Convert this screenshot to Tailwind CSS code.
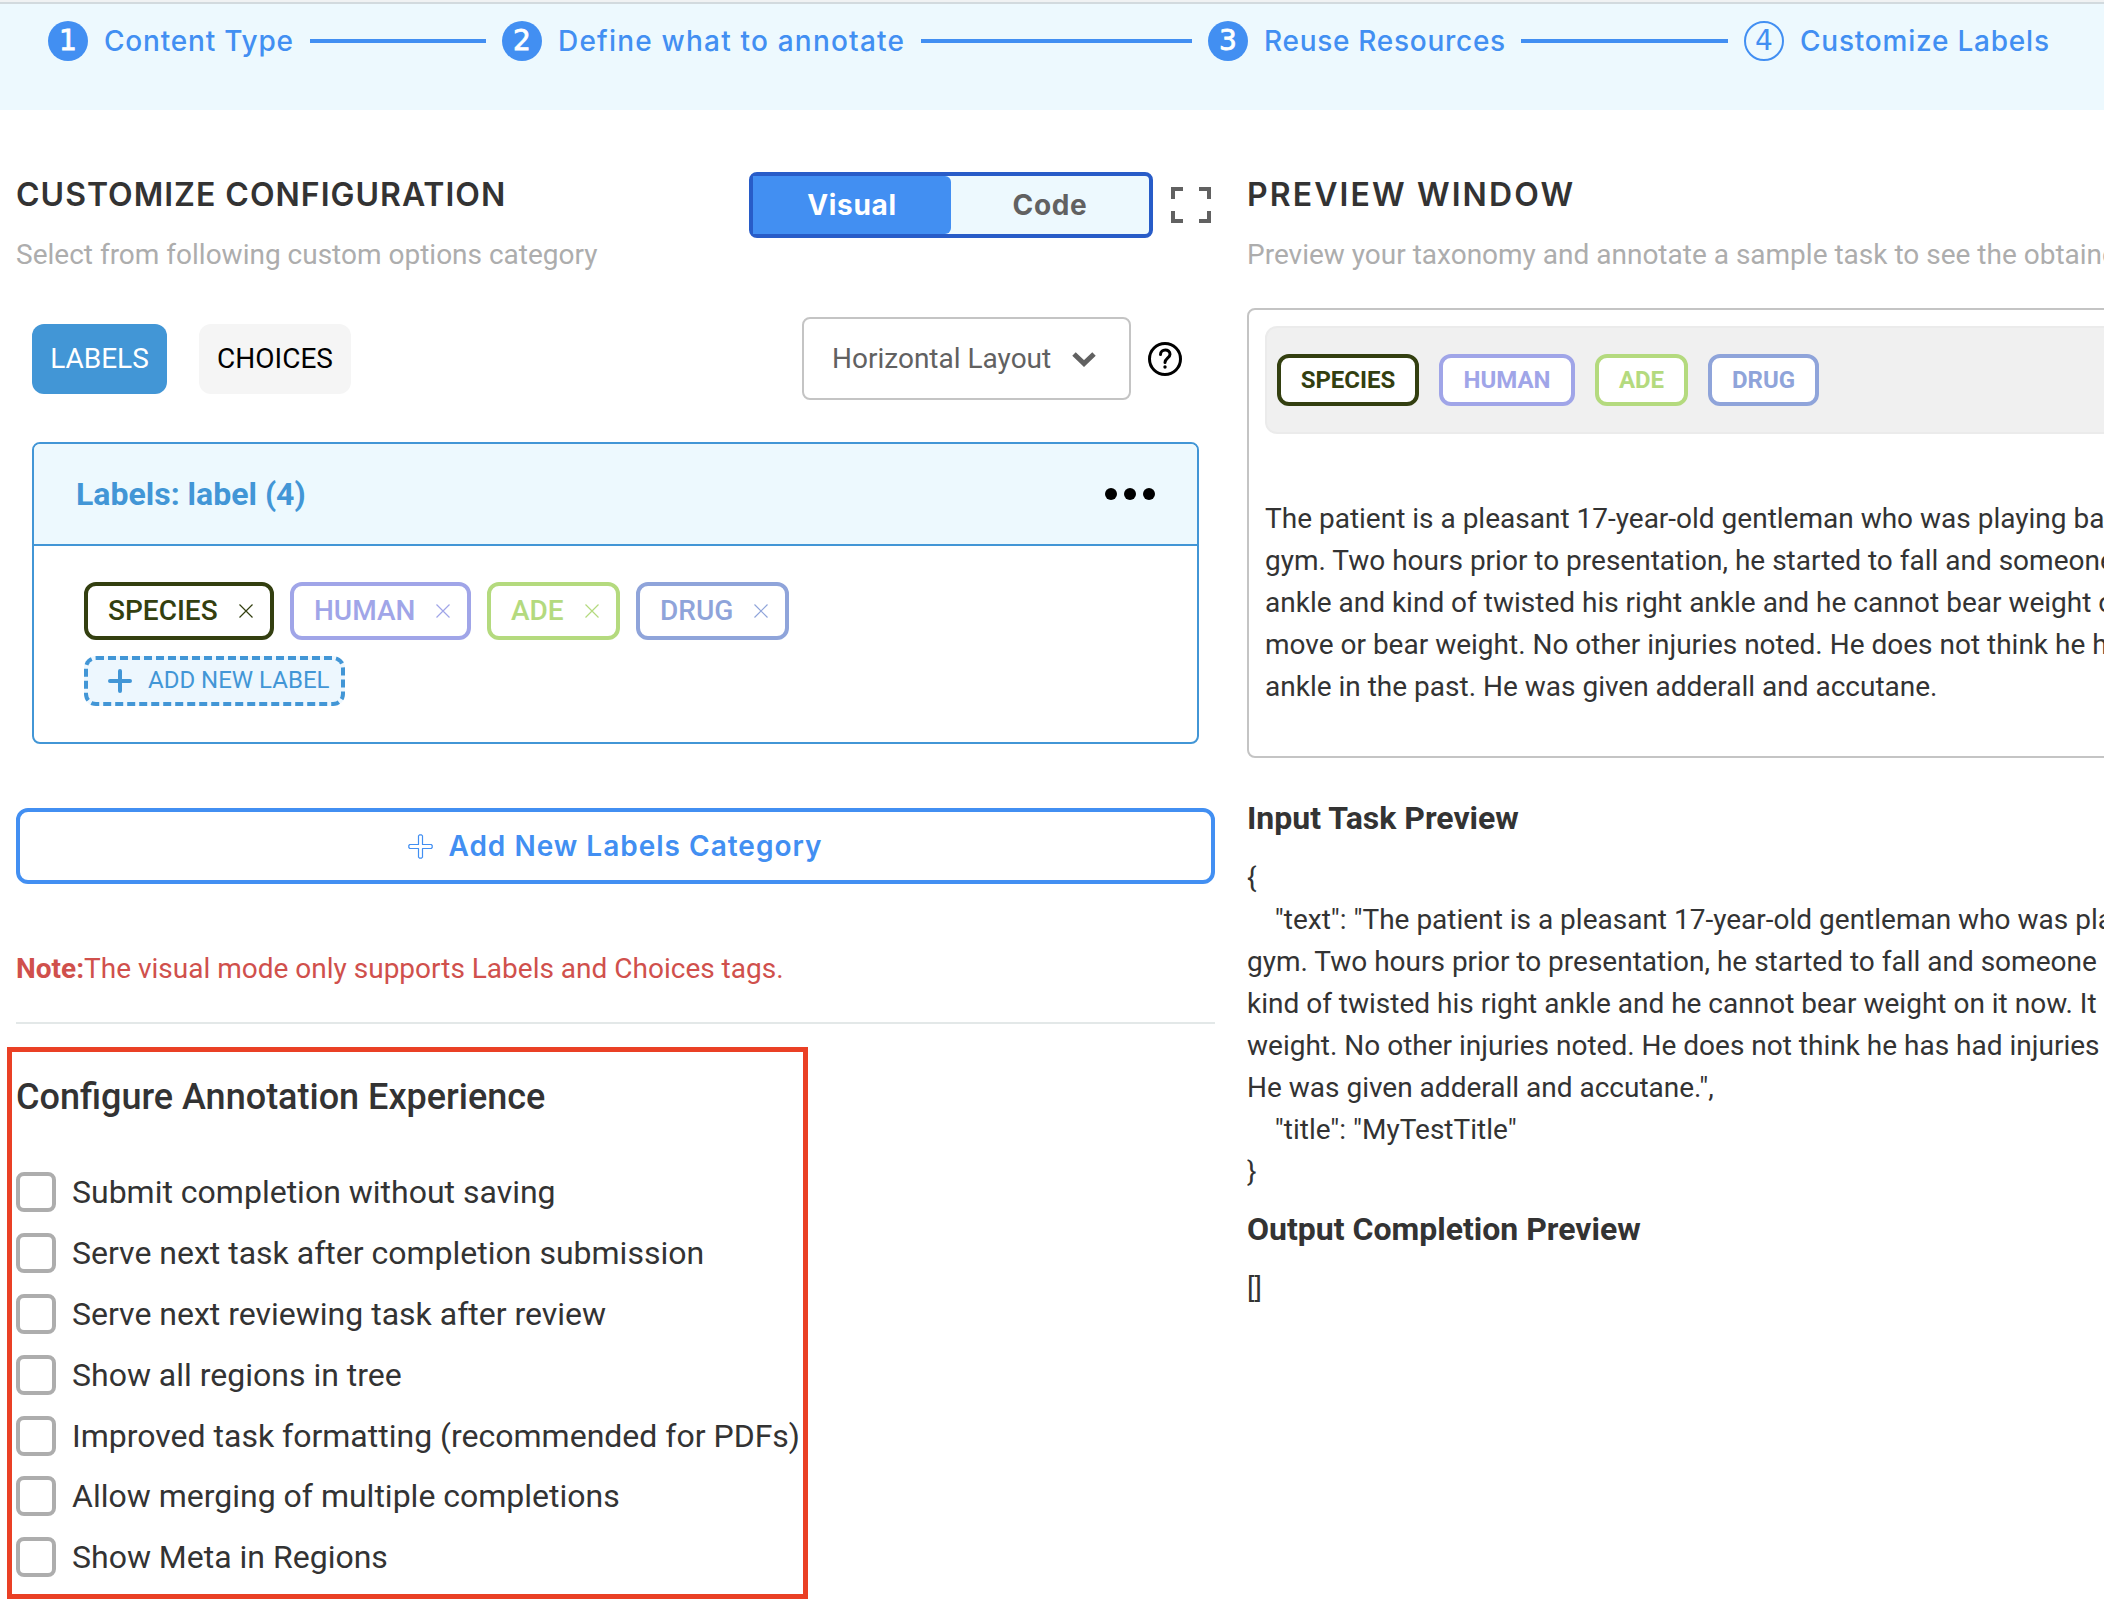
<!DOCTYPE html>
<html lang="en"><head><meta charset="utf-8"><title>Customize Labels</title>
<script src="https://cdn.jsdelivr.net/npm/@tailwindcss/browser@4"></script></head>
<body class="w-[2104px] h-[1618px] overflow-hidden bg-white font-['Roboto',sans-serif] text-[28px] leading-[42px] text-[#333]">
<header class="h-[110px] border-t-2 border-[#f0f2f3] bg-[#edf9fe]">
  <div class="h-[108px] border-t-2 border-[#d2dade] pt-[17px]">
  <ol class="flex items-center h-10 pl-12 font-['Inter',sans-serif] font-medium text-[#428ff2] whitespace-nowrap">
    <li class="flex items-center"><span class="size-10 rounded-full bg-[#428ff2] text-white flex items-center justify-center font-['DejaVu_Sans',sans-serif] font-normal [-webkit-text-stroke:0.8px_white]">1</span><span class="ml-4 w-[190px] tracking-[0.8px]">Content Type</span></li>
    <li class="mx-4 h-1 w-[176px] bg-[#428ff2]"></li>
    <li class="flex items-center"><span class="size-10 rounded-full bg-[#428ff2] text-white flex items-center justify-center font-['DejaVu_Sans',sans-serif] font-normal [-webkit-text-stroke:0.8px_white]">2</span><span class="ml-4 w-[347px] tracking-[1.2px]">Define what to annotate</span></li>
    <li class="mx-4 h-1 w-[271px] bg-[#428ff2]"></li>
    <li class="flex items-center"><span class="size-10 rounded-full bg-[#428ff2] text-white flex items-center justify-center font-['DejaVu_Sans',sans-serif] font-normal [-webkit-text-stroke:0.8px_white]">3</span><span class="ml-4 w-[241px] tracking-[0.72px]">Reuse Resources</span></li>
    <li class="mx-4 h-1 w-[207px] bg-[#428ff2]"></li>
    <li class="flex items-center"><span class="size-10 rounded-full border-2 border-[#428ff2] flex items-center justify-center font-['DejaVu_Sans',sans-serif] font-normal">4</span><span class="ml-4 tracking-[0.78px]">Customize Labels</span></li>
  </ol></div>
</header>
<main class="flex">
<section class="w-[1199px] ml-4 shrink-0">
  <div class="flex h-[207px] pt-[62px]">
    <div class="w-[733px]">
      <h1 class="mt-[2px] h-[42px] font-['Inter',sans-serif] font-semibold text-[32px] tracking-[1px] whitespace-nowrap">CUSTOMIZE CONFIGURATION</h1>
      <p class="mt-[18px] text-[#adadad]">Select from following custom options category</p>
    </div>
    <div class="flex w-[404px] h-[66px] rounded-lg border-4 border-[#285cc8] bg-[#edf9fe] font-['Inter',sans-serif] font-bold tracking-[0.7px]">
      <div class="w-[198px] rounded-r-md bg-[#428ff2] text-white flex items-center justify-center">Visual</div>
      <div class="flex-1 text-[#616161] flex items-center justify-center">Code</div>
    </div>
    <svg class="ml-[18px] mt-[15px] w-10 h-9" viewBox="0 0 40 36" fill="none" stroke="#616161" stroke-width="4"><path d="M2 12V2H12M28 2H38V12M38 24V34H28M12 34H2V24"/></svg>
  </div>
  <div class="flex items-center h-[83px] pl-4">
    <div class="w-[135px] h-[70px] rounded-xl bg-[#4296d6] text-white flex items-center justify-center">LABELS</div>
    <div class="ml-8 w-[152px] h-[70px] rounded-xl bg-[#f5f5f5] text-black flex items-center justify-center">CHOICES</div>
    <div class="ml-[451px] w-[329px] h-[83px] rounded-lg border-2 border-[#c4c4c4] text-[#616161] flex items-center pl-7">Horizontal Layout
      <svg class="ml-[21px] w-6 h-4" viewBox="0 0 24 16" fill="none" stroke="#616161" stroke-width="5"><path d="M2 3L12 12.500L22 3"/></svg></div>
    <svg class="ml-[17px] size-[34px]" viewBox="0 0 34 34" fill="none" stroke="#000" stroke-width="3"><circle cx="17" cy="17" r="15.500"/><path d="M12.500 12.500C12.500 6.500 22 6.500 22 12.200C22 16 17 16.500 17 20.500" stroke-linecap="round"/><circle cx="17" cy="25" r="1.700" fill="#000" stroke="none"/></svg>
  </div>
  <div class="ml-4 mt-[42px] w-[1167px] h-[302px] rounded-lg border-2 border-[#4296d6] overflow-hidden">
    <div class="flex items-center justify-between h-[102px] border-b-2 border-[#4296d6] bg-[#edf9fe] pl-[42px] pr-[42px]">
      <h2 class="text-[32px] font-bold text-[#4296d6]">Labels: label (4)</h2>
      <div class="flex gap-[7px]"><i class="size-3 rounded-full bg-black"></i><i class="size-3 rounded-full bg-black"></i><i class="size-3 rounded-full bg-black"></i></div>
    </div>
    <div class="pl-[50px] pt-9">
      <div class="flex gap-4 font-medium">
        <div class="w-[190px] h-[58px] rounded-xl border-4 border-[#333f10] text-[#333f10] flex items-center justify-between pl-5 pr-[17px]">SPECIES<svg class="size-[14px]" viewBox="0 0 14 14" stroke="currentColor" stroke-width="1.200"><path d="M.5.5L13.500 13.500M13.500.5L.5 13.500"/></svg></div>
        <div class="w-[181px] h-[58px] rounded-xl border-4 border-[#a0a5e8] text-[#a0a5e8] flex items-center justify-between pl-5 pr-[17px]">HUMAN<svg class="size-[14px]" viewBox="0 0 14 14" stroke="currentColor" stroke-width="1.200"><path d="M.5.5L13.500 13.500M13.500.5L.5 13.500"/></svg></div>
        <div class="w-[133px] h-[58px] rounded-xl border-4 border-[#b4da7e] text-[#b4da7e] flex items-center justify-between pl-5 pr-[17px]">ADE<svg class="size-[14px]" viewBox="0 0 14 14" stroke="currentColor" stroke-width="1.200"><path d="M.5.5L13.500 13.500M13.500.5L.5 13.500"/></svg></div>
        <div class="w-[153px] h-[58px] rounded-xl border-4 border-[#8fa4da] text-[#8fa4da] flex items-center justify-between pl-5 pr-[17px]">DRUG<svg class="size-[14px]" viewBox="0 0 14 14" stroke="currentColor" stroke-width="1.200"><path d="M.5.5L13.500 13.500M13.500.5L.5 13.500"/></svg></div>
      </div>
      <div class="mt-4 w-[261px] h-[50px] rounded-xl border-4 border-dashed border-[#4296d6] bg-[#edf7fe] text-[#4296d6] text-2xl flex items-center pl-5 whitespace-nowrap"><svg class="size-6 mr-4" viewBox="0 0 24 24" stroke="currentColor" stroke-width="4" stroke-linecap="round"><path d="M12 2V22M2 12H22"/></svg><span class="pb-[2px]">ADD NEW LABEL</span></div>
    </div>
  </div>
  <div class="mt-16 h-[76px] rounded-xl border-4 border-[#428ff2] text-[#428ff2] flex items-center justify-center font-['Inter',sans-serif] font-semibold tracking-[1px]"><svg class="size-[25px] mr-[15px]" viewBox="0 0 25 25" fill="none" stroke="currentColor" stroke-width="1.200" stroke-linejoin="round"><path d="M11.500.8H13.500L14.500 1.800V10.500H23.200L24.200 11.500V13.500L23.200 14.500H14.500V23.200L13.500 24.200H11.500L10.500 23.200V14.500H1.800L.8 13.500V11.500L1.800 10.500H10.500V1.800Z"/></svg>Add New Labels Category</div>
  <p class="mt-16 text-[#d0504c]"><b>Note:</b>The visual mode only supports Labels and Choices tags.</p>
  <div class="mt-8 h-[2px] bg-[#e3e8e8]"></div>
  <div class="-ml-[9px] mt-[23px] w-[801px] h-[552px] border-[5px] border-[#ea4025] pl-1 pt-[24px]">
    <h2 class="h-[42px] text-[36px] font-medium">Configure Annotation Experience</h2>
    <div class="mt-[44px] text-[32px] whitespace-nowrap">
      <label class="flex items-center h-[60.800px]"><span class="size-10 rounded-lg border-4 border-[#adadad] mr-4"></span>Submit completion without saving</label>
      <label class="flex items-center h-[60.800px]"><span class="size-10 rounded-lg border-4 border-[#adadad] mr-4"></span>Serve next task after completion submission</label>
      <label class="flex items-center h-[60.800px]"><span class="size-10 rounded-lg border-4 border-[#adadad] mr-4"></span>Serve next reviewing task after review</label>
      <label class="flex items-center h-[60.800px]"><span class="size-10 rounded-lg border-4 border-[#adadad] mr-4"></span>Show all regions in tree</label>
      <label class="flex items-center h-[60.800px]"><span class="size-10 rounded-lg border-4 border-[#adadad] mr-4"></span>Improved task formatting (recommended for PDFs)</label>
      <label class="flex items-center h-[60.800px]"><span class="size-10 rounded-lg border-4 border-[#adadad] mr-4"></span>Allow merging of multiple completions</label>
      <label class="flex items-center h-[60.800px]"><span class="size-10 rounded-lg border-4 border-[#adadad] mr-4"></span>Show Meta in Regions</label>
    </div>
  </div>
</section>
<section class="w-[857px] ml-8 shrink-0 overflow-hidden whitespace-nowrap">
  <div class="h-[198px] pt-16">
    <h1 class="h-[42px] font-['Inter',sans-serif] font-semibold text-[32px] tracking-[2.1px]">PREVIEW WINDOW</h1>
    <p class="mt-[18px] text-[#adadad]">Preview your taxonomy and annotate a sample task to see the obtained</p>
  </div>
  <div class="h-[450px] w-[900px] rounded-lg border-2 border-[#c4c4c4] pl-4 pt-4">
    <div class="h-[108px] rounded-xl border-2 border-[#ebebeb] bg-[#f0f0f0] flex items-center gap-5 pl-[10px] text-2xl font-bold">
      <div class="w-[142px] h-[52px] rounded-xl border-4 border-[#333f10] bg-white text-[#333f10] flex items-center justify-center">SPECIES</div>
      <div class="w-[136px] h-[52px] rounded-xl border-4 border-[#a0a5e8] bg-white text-[#a0a5e8] flex items-center justify-center">HUMAN</div>
      <div class="w-[93px] h-[52px] rounded-xl border-4 border-[#b4da7e] bg-white text-[#b4da7e] flex items-center justify-center">ADE</div>
      <div class="w-[111px] h-[52px] rounded-xl border-4 border-[#8fa4da] bg-white text-[#8fa4da] flex items-center justify-center">DRUG</div>
    </div>
    <p class="mt-16">The patient is a pleasant 17-year-old gentleman who was playing basketball<br>gym. Two hours prior to presentation, he started to fall and someone<br>ankle and kind of twisted his right ankle and he cannot bear weight on<br>move or bear weight. No other injuries noted. He does not think he has<br>ankle in the past. He was given adderall and accutane.</p>
  </div>
  <h2 class="mt-[39px] text-[32px] font-bold">Input Task Preview</h2>
  <pre class="mt-[18px] font-['Roboto',sans-serif]">{
    "text": "The patient is a pleasant 17-year-old gentleman who was playing
gym. Two hours prior to presentation, he started to fall and someone s
kind of twisted his right ankle and he cannot bear weight on it now. It
weight. No other injuries noted. He does not think he has had injuries
He was given adderall and accutane.",
    "title": "MyTestTitle"
}</pre>
  <h2 class="mt-[15px] text-[32px] font-bold">Output Completion Preview</h2>
  <p class="mt-[18px]">[]</p>
</section>
</main>
</body></html>
